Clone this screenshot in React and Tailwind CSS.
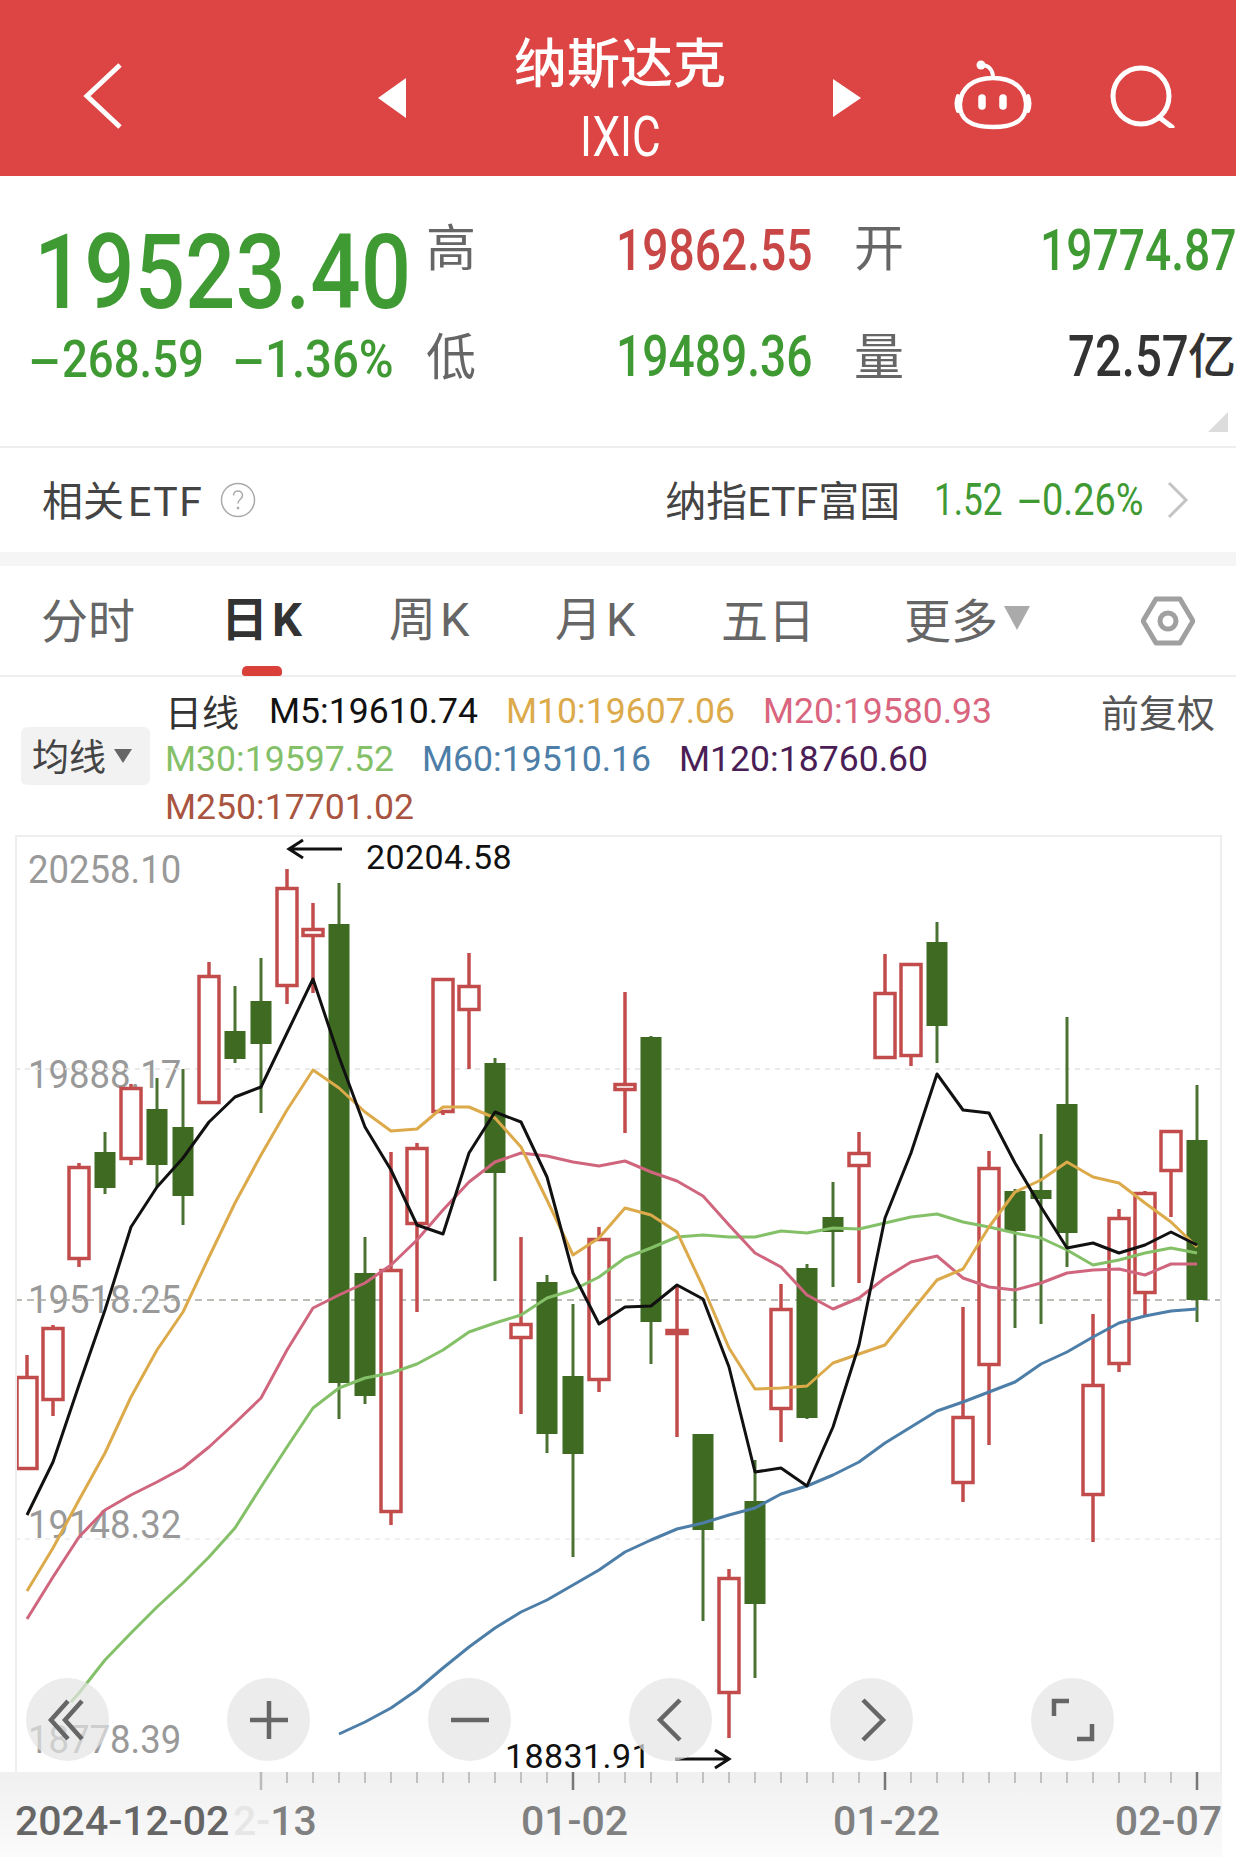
import React from "react";

const cjk = "font-['Noto_Sans_CJK_SC',sans-serif]";
const roboto = "font-['Roboto','Noto_Sans_CJK_SC',sans-serif]";

const xAt = (i) => 27 + i * 26;

// type, high, body top, body bottom, low
const candles = [
  ["r", 1355, 1376, 1470, 1470], ["r", 1325, 1327, 1401, 1416], ["r", 1163, 1166, 1260, 1267],
  ["g", 1132, 1152, 1188, 1194], ["r", 1084, 1087, 1160, 1165], ["g", 1078, 1109, 1165, 1187],
  ["g", 1069, 1127, 1196, 1225], ["r", 962, 975, 1104, 1104], ["g", 986, 1031, 1059, 1063],
  ["g", 958, 1001, 1044, 1113], ["r", 869, 887, 987, 1004], ["r", 903, 928, 937, 993],
  ["g", 883, 924, 1383, 1419], ["g", 1237, 1273, 1396, 1404], ["r", 1152, 1269, 1513, 1525],
  ["r", 1143, 1147, 1225, 1312], ["r", 978, 978, 1113, 1115], ["r", 953, 985, 1011, 1069],
  ["g", 1058, 1063, 1173, 1281], ["r", 1237, 1323, 1339, 1414], ["g", 1275, 1282, 1434, 1453],
  ["g", 1304, 1376, 1454, 1557], ["r", 1227, 1238, 1381, 1392], ["r", 992, 1083, 1091, 1133],
  ["g", 1036, 1037, 1322, 1364], ["r", 1285, 1329, 1335, 1437], ["g", 1434, 1434, 1530, 1621],
  ["r", 1569, 1577, 1694, 1738], ["g", 1460, 1501, 1604, 1678], ["r", 1284, 1308, 1410, 1442],
  ["g", 1264, 1268, 1418, 1419], ["g", 1182, 1217, 1232, 1287], ["r", 1132, 1152, 1167, 1283],
  ["r", 954, 992, 1059, 1059], ["r", 963, 963, 1057, 1066], ["g", 922, 942, 1026, 1063],
  ["r", 1307, 1416, 1484, 1502], ["r", 1151, 1167, 1366, 1445], ["g", 1189, 1191, 1231, 1328],
  ["g", 1134, 1190, 1199, 1324], ["g", 1017, 1104, 1233, 1267], ["r", 1314, 1384, 1496, 1542],
  ["r", 1209, 1217, 1365, 1372], ["r", 1191, 1192, 1294, 1317], ["r", 1130, 1130, 1172, 1217],
  ["g", 1085, 1140, 1300, 1322],
];

const m5 = [1515, 1462, 1385, 1310, 1227, 1187, 1158, 1122, 1097, 1087, 1033, 979, 1057, 1127, 1170, 1225, 1234, 1153, 1112, 1122, 1177, 1273, 1324, 1307, 1306, 1285, 1299, 1367, 1472, 1468, 1486, 1427, 1345, 1218, 1153, 1074, 1110, 1113, 1163, 1207, 1248, 1243, 1253, 1245, 1232, 1245];
const m10 = [1591, 1548, 1500, 1453, 1397, 1350, 1312, 1257, 1203, 1155, 1110, 1070, 1088, 1112, 1131, 1129, 1107, 1107, 1118, 1147, 1200, 1255, 1238, 1208, 1215, 1232, 1287, 1348, 1389, 1388, 1386, 1363, 1354, 1345, 1312, 1280, 1269, 1227, 1192, 1180, 1162, 1177, 1183, 1203, 1222, 1247];
const m20 = [1619, 1577, 1537, 1510, 1495, 1482, 1468, 1447, 1423, 1398, 1350, 1308, 1295, 1283, 1265, 1240, 1210, 1182, 1162, 1153, 1156, 1162, 1166, 1161, 1172, 1181, 1196, 1225, 1253, 1267, 1295, 1309, 1298, 1278, 1262, 1256, 1278, 1287, 1290, 1283, 1273, 1270, 1269, 1275, 1264, 1264];
const m30 = [null, null, 1693, 1660, 1633, 1607, 1583, 1557, 1528, 1487, 1447, 1408, 1388, 1378, 1373, 1364, 1350, 1332, 1323, 1315, 1298, 1290, 1277, 1258, 1248, 1237, 1235, 1237, 1237, 1231, 1233, 1228, 1229, 1223, 1217, 1214, 1222, 1227, 1233, 1238, 1250, 1265, 1260, 1253, 1248, 1253];
const m60 = [null, null, null, null, null, null, null, null, null, null, null, null, 1734, 1722, 1708, 1690, 1668, 1647, 1628, 1612, 1600, 1585, 1570, 1552, 1540, 1529, 1523, 1515, 1508, 1494, 1486, 1475, 1462, 1443, 1427, 1411, 1402, 1392, 1382, 1364, 1352, 1337, 1323, 1316, 1311, 1309];

const series = [
  { ys: m60, color: "#4d7ea8" },
  { ys: m30, color: "#84c068", start: "71,1702 " },
  { ys: m20, color: "#d0667e" },
  { ys: m10, color: "#dcaa4a" },
  { ys: m5, color: "#111111" },
];

const toPoints = (ys) =>
  ys.map((y, i) => (y === null ? null : `${xAt(i)},${y}`)).filter(Boolean).join(" ");

const Candle = ({ c, i }) => {
  const [type, high, top, bottom, low] = c;
  const x = xAt(i);
  if (type === "g") {
    return (
      <g>
        <line x1={x} x2={x} y1={high} y2={low} stroke="#4a7232" strokeWidth="3" />
        <rect x={x - 10.5} y={top} width="21" height={bottom - top} fill="#3f6a22" />
      </g>
    );
  }
  return (
    <g>
      <line x1={x} x2={x} y1={high} y2={top} stroke="#c24c4c" strokeWidth="3.5" />
      <line x1={x} x2={x} y1={bottom} y2={low} stroke="#c24c4c" strokeWidth="3.5" />
      <rect x={x - 10} y={top + 1.5} width="20" height={bottom - top - 3} fill="#ffffff" stroke="#c24c4c" strokeWidth="3.5" />
    </g>
  );
};

const KChart = () => (
  <svg viewBox="15 835 1207 937" className="absolute inset-0 w-[1207px] h-[937px]">
    <line x1="15" x2="1222" y1="1069" y2="1069" stroke="#e4e4e4" strokeWidth="1.5" strokeDasharray="5 5" />
    <line x1="15" x2="1222" y1="1300" y2="1300" stroke="#a8a8a0" strokeWidth="1.5" strokeDasharray="7 5" />
    <line x1="15" x2="1222" y1="1539" y2="1539" stroke="#ececec" strokeWidth="1.5" strokeDasharray="5 5" />
    {candles.map((c, i) => (
      <Candle key={i} c={c} i={i} />
    ))}
    {series.map((s) => (
      <polyline key={s.color} points={(s.start || "") + toPoints(s.ys)} fill="none" stroke={s.color} strokeWidth="3" strokeLinejoin="round" />
    ))}
    <path d="M342 849H289M303 840l-14 9 14 9" fill="none" stroke="#111" strokeWidth="3" />
    <path d="M675 1759H729M715 1750l14 9-14 9" fill="none" stroke="#111" strokeWidth="3" />
  </svg>
);

// the app's digits are a condensed DIN, Roboto squeezed sideways is the nearest installed
const Narrow = ({ scale, children }) => (
  <span className={`inline-block whitespace-nowrap origin-left ${roboto} ${scale}`}>{children}</span>
);

// the same font draws its minus much wider than Roboto's hyphen
const Dash = ({ w }) => (
  <span className={`block shrink-0 ${roboto} ${w}`}>
    <span className="inline-block origin-left scale-x-[1.9]">-</span>
  </span>
);

const AxisLabel = ({ top, children }) => (
  <div className={`absolute left-[13px] ${top} ${roboto} text-[38px] leading-none text-[#999999]`}>
    <span className="inline-block origin-left scale-x-[.96]">{children}</span>
  </div>
);

const ChartButton = ({ left, children }) => (
  <div className={`absolute ${left} top-[843px] w-[83px] h-[83px] rounded-full bg-[#e4e4e4]/70 flex items-center justify-center`}>
    <svg width="48" height="48" viewBox="0 0 48 48" fill="none" stroke="#666666" strokeWidth="4.5">
      {children}
    </svg>
  </div>
);

const Tab = ({ w, active, children }) => (
  <div className={`${w} shrink-0 text-[47px] leading-none ${active ? "font-bold text-[#333333]" : "text-[#666666]"}`}>
    {children}
  </div>
);

export default function App() {
  return (
    <div className={`w-[1236px] h-[1857px] bg-white overflow-hidden ${cjk}`}>
      {/* header */}
      <header className="h-[176px] bg-[#dd4444] flex items-center text-white pl-[82px] pt-[16px]">
        <svg width="42" height="68" viewBox="0 0 42 68" fill="none" stroke="#ffffff" strokeWidth="5">
          <path d="M38 3 5 34l33 31" strokeLinejoin="miter" />
        </svg>
        <svg width="30" height="40" viewBox="0 0 30 40" fill="#ffffff" className="ml-[253px] mt-[4px]">
          <path d="M29 0v40L1 20z" />
        </svg>
        <div className="w-[426px] flex flex-col items-center mt-[4px]">
          <div className="text-[53px] leading-[60px] font-medium">纳斯达克</div>
          <div className={`${roboto} text-[55px] leading-[60px] mt-[17px]`}>
            <span className="inline-block scale-x-[.8]">IXIC</span>
          </div>
        </div>
        <svg width="28" height="38" viewBox="0 0 28 38" fill="#ffffff" className="mt-[4px]">
          <path d="M0 0v38l28-19z" />
        </svg>
        <svg width="86" height="74" viewBox="0 0 86 74" fill="none" stroke="#ffffff" className="ml-[89px]">
          <path d="M43 19C22 19 11 30 10 44c-1 16 10 24 33 24s34-8 33-24C75 30 64 19 43 19z" strokeWidth="4.5" />
          <path d="M8 37c-2 5-2 10 0 15M78 37c2 5 2 10 0 15" strokeWidth="4" strokeLinecap="round" />
          <path d="M31 6c7 0 12 4 12 13" strokeWidth="4" />
          <circle cx="31" cy="6" r="4.5" fill="#ffffff" stroke="none" />
          <path d="M32 39v8M53 39v8" strokeWidth="7.5" strokeLinecap="round" />
        </svg>
        <svg width="66" height="64" viewBox="0 0 66 64" fill="none" stroke="#ffffff" strokeWidth="5" className="ml-[73px]">
          <circle cx="32" cy="32" r="28" />
          <path d="m51 54 12 9" strokeLinecap="round" />
        </svg>
      </header>

      {/* quote */}
      <section className="relative h-[272px] border-b-2 border-[#eeeeee] flex">
        <div className="w-[426px] pl-[36px] shrink-0">
          <div className="flex ml-[-2px] mt-[42px] text-[103px] leading-[110px] font-medium text-[#409a34]">
            <Narrow scale="scale-x-[.86]">19523.40</Narrow>
          </div>
          <div className="flex ml-[-8px] mt-[2px] text-[52px] leading-[60px] text-[#409a34] font-medium">
            <div className="flex w-[204px]">
              <Dash w="w-[34px]" />
              <Narrow scale="scale-x-[.875]">268.59</Narrow>
            </div>
            <div className="flex">
              <Dash w="w-[33px]" />
              <Narrow scale="scale-x-[.91]">1.36%</Narrow>
            </div>
          </div>
        </div>
        <div className="mt-[38px] grid grid-cols-[190px_238px_186px_196px] grid-rows-[60px_60px] gap-y-[49px] text-[50px] leading-[60px] text-[#666666]">
          <div>高</div>
          <div className="flex pt-[7px] text-[57px] font-medium text-[#c84646]"><Narrow scale="scale-x-[.81]">19862.55</Narrow></div>
          <div>开</div>
          <div className="flex pt-[7px] text-[57px] font-medium text-[#409a34]"><Narrow scale="scale-x-[.81]">19774.87</Narrow></div>
          <div>低</div>
          <div className="flex pt-[4px] text-[57px] font-medium text-[#409a34]"><Narrow scale="scale-x-[.81]">19489.36</Narrow></div>
          <div>量</div>
          <div className="flex pt-[4px] text-[#333333] font-medium whitespace-nowrap pl-[28px]">
            <span className="flex w-[120px] text-[57px]"><Narrow scale="scale-x-[.83]">72.57</Narrow></span>
            <span className="text-[48px] mt-[-5px]">亿</span>
          </div>
        </div>
        <svg width="20" height="20" viewBox="0 0 20 20" className="absolute right-[8px] bottom-[14px]">
          <path d="M20 0v20H0z" fill="#dcdcdc" />
        </svg>
      </section>

      {/* related etf */}
      <section className="h-[104px] flex items-center pl-[42px] text-[41px] leading-none text-[#444444]">
        <span>相关<span className={`${roboto} ml-[4px] text-[41px] tracking-[1.5px]`}>ETF</span></span>
        <svg width="36" height="36" viewBox="0 0 36 36" fill="none" stroke="#aaaaaa" className="ml-[17px]">
          <circle cx="18" cy="18" r="16.5" strokeWidth="1.5" />
          <path d="M13.5 13.5c0-6 9-6 9 0 0 4-4.5 3.5-4.5 8" strokeWidth="1.5" />
          <circle cx="18" cy="26" r="1" fill="#aaaaaa" />
        </svg>
        <span className="ml-[409px] w-[269px] whitespace-nowrap">纳指<span className={roboto}>ETF</span>富国</span>
        <span className="flex w-[84px] text-[#409a34] text-[44px]"><Narrow scale="scale-x-[.8]">1.52</Narrow></span>
        <span className="flex w-[148px] text-[#409a34] text-[44px]">
          <Dash w="w-[24px]" />
          <Narrow scale="scale-x-[.86]">0.26%</Narrow>
        </span>
        <svg width="24" height="38" viewBox="0 0 24 38" fill="none" stroke="#c4c4c4" strokeWidth="3">
          <path d="m3 2 17 17L3 36" />
        </svg>
      </section>
      <div className="h-[14px] bg-[#f5f5f5]" />

      {/* tabs */}
      <nav className="relative h-[111px] border-b-2 border-[#eeeeee] flex items-center pl-[41px] pb-[6px]">
        <Tab w="w-[180px]">分时</Tab>
        <Tab w="w-[168px]" active>日<span className={`${roboto} ml-[4px]`}>K</span></Tab>
        <Tab w="w-[166px]">周<span className={`${roboto} ml-[4px]`}>K</span></Tab>
        <Tab w="w-[166px]">月<span className={`${roboto} ml-[4px]`}>K</span></Tab>
        <Tab w="w-[183px]">五日</Tab>
        <Tab w="w-[100px]">更多</Tab>
        <svg width="26" height="24" viewBox="0 0 26 24" fill="#aaaaaa"><path d="M0 0h26L13 24z" /></svg>
        <svg width="54" height="50" viewBox="0 0 54 50" fill="none" stroke="#a0a0a0" className="ml-[111px] mt-[6px]">
          <path d="M15 3h24l13 22-13 22H15L2 25z" strokeWidth="5" strokeLinejoin="round" />
          <circle cx="27" cy="25" r="8" strokeWidth="5" />
        </svg>
        <div className="absolute left-[242px] bottom-[-1px] w-[40px] h-[10px] rounded-t-[5px] rounded-b-[3px] bg-[#d9403a]" />
      </nav>

      {/* legend */}
      <section className="relative h-[158px] pl-[165px] pt-[10px]">
        <div className={`${roboto} text-[35.6px] leading-[48px]`}>
          <div className="flex">
            <span className={`${cjk} w-[104px] text-[#333333] text-[37px]`}>日线</span>
            <div className="flex gap-[28px]">
              <span className="text-[#111111]">M5:19610.74</span>
              <span className="text-[#dcaa4a]">M10:19607.06</span>
              <span className="text-[#d9657e]">M20:19580.93</span>
            </div>
            <span className={`${cjk} ml-auto mr-[21px] text-[#555555] text-[38px]`}>前复权</span>
          </div>
          <div className="flex gap-[28px]">
            <span className="text-[#84c068]">M30:19597.52</span>
            <span className="text-[#4d7ea8]">M60:19510.16</span>
            <span className="text-[#4a1e55]">M120:18760.60</span>
          </div>
          <div>
            <span className="text-[#a85440]">M250:17701.02</span>
          </div>
        </div>
        <div className="absolute left-[21px] top-[50px] w-[129px] h-[58px] rounded-[6px] bg-[#f2f2f2] flex items-center pl-[11px] text-[37px] text-[#444444]">
          均线
          <svg width="18" height="14" viewBox="0 0 18 14" fill="#666666" className="ml-[8px]"><path d="M0 0h18L9 14z" /></svg>
        </div>
      </section>

      {/* chart */}
      <div className="relative ml-[15px] w-[1207px] h-[937px]">
        <AxisLabel top="top-[16px]">20258.10</AxisLabel>
        <AxisLabel top="top-[221px]">19888.17</AxisLabel>
        <AxisLabel top="top-[446px]">19518.25</AxisLabel>
        <AxisLabel top="top-[671px]">19148.32</AxisLabel>
        <AxisLabel top="top-[886px]">18778.39</AxisLabel>
        <KChart />
        <div className="absolute inset-0 border-2 border-[#eeeeee] border-b-0 pointer-events-none" />
        <div className={`absolute left-[351px] top-[5px] ${roboto} text-[34px] leading-none tracking-[0.4px] text-[#111111]`}>20204.58</div>
        <div className={`absolute left-[490px] top-[904px] ${roboto} text-[34px] leading-none tracking-[0.4px] text-[#111111]`}>18831.91</div>
        <ChartButton left="left-[11px]">
          <path d="M24 5 7 24l17 19M38 5 21 24l17 19" />
        </ChartButton>
        <ChartButton left="left-[212px]">
          <path d="M5 24h38M24 5v38" />
        </ChartButton>
        <ChartButton left="left-[413px]">
          <path d="M5 24h38" />
        </ChartButton>
        <ChartButton left="left-[614px]">
          <path d="M33 4 13 24l20 20" />
        </ChartButton>
        <ChartButton left="left-[815px]">
          <path d="m15 4 20 20-20 20" />
        </ChartButton>
        <ChartButton left="left-[1016px]">
          <path d="M5 20V5h15M43 28v15H28" />
        </ChartButton>
      </div>

      {/* time axis */}
      <div className="h-[85px] w-[1222px] bg-linear-to-b from-[#f0f0f0] to-[#fbfbfb]">
        <svg width="1236" height="18" viewBox="0 0 1236 18" className="block">
          {candles.map((c, i) => {
            if (i < 9) return null;
            const major = (i - 9) % 12 === 0;
            const stroke = i === 9 ? "#bbbbbb" : major ? "#777777" : "#b0b0b0";
            return <line key={i} x1={xAt(i)} x2={xAt(i)} y1="0" y2={major ? 18 : 11} stroke={stroke} strokeWidth={major ? 2.5 : 1.5} />;
          })}
        </svg>
        <div className={`flex mt-[9px] pl-[15px] ${roboto} text-[41px] leading-[44px] font-medium text-[#808080]`}>
          <span className="text-[#666666] w-[218px]">2024-12-02</span>
          <span className="w-[288px]"><span className="text-[#e6e6e6]">2-</span>13</span>
          <span className="w-[312px]">01-02</span>
          <span className="w-[282px]">01-22</span>
          <span>02-07</span>
        </div>
      </div>
    </div>
  );
}
